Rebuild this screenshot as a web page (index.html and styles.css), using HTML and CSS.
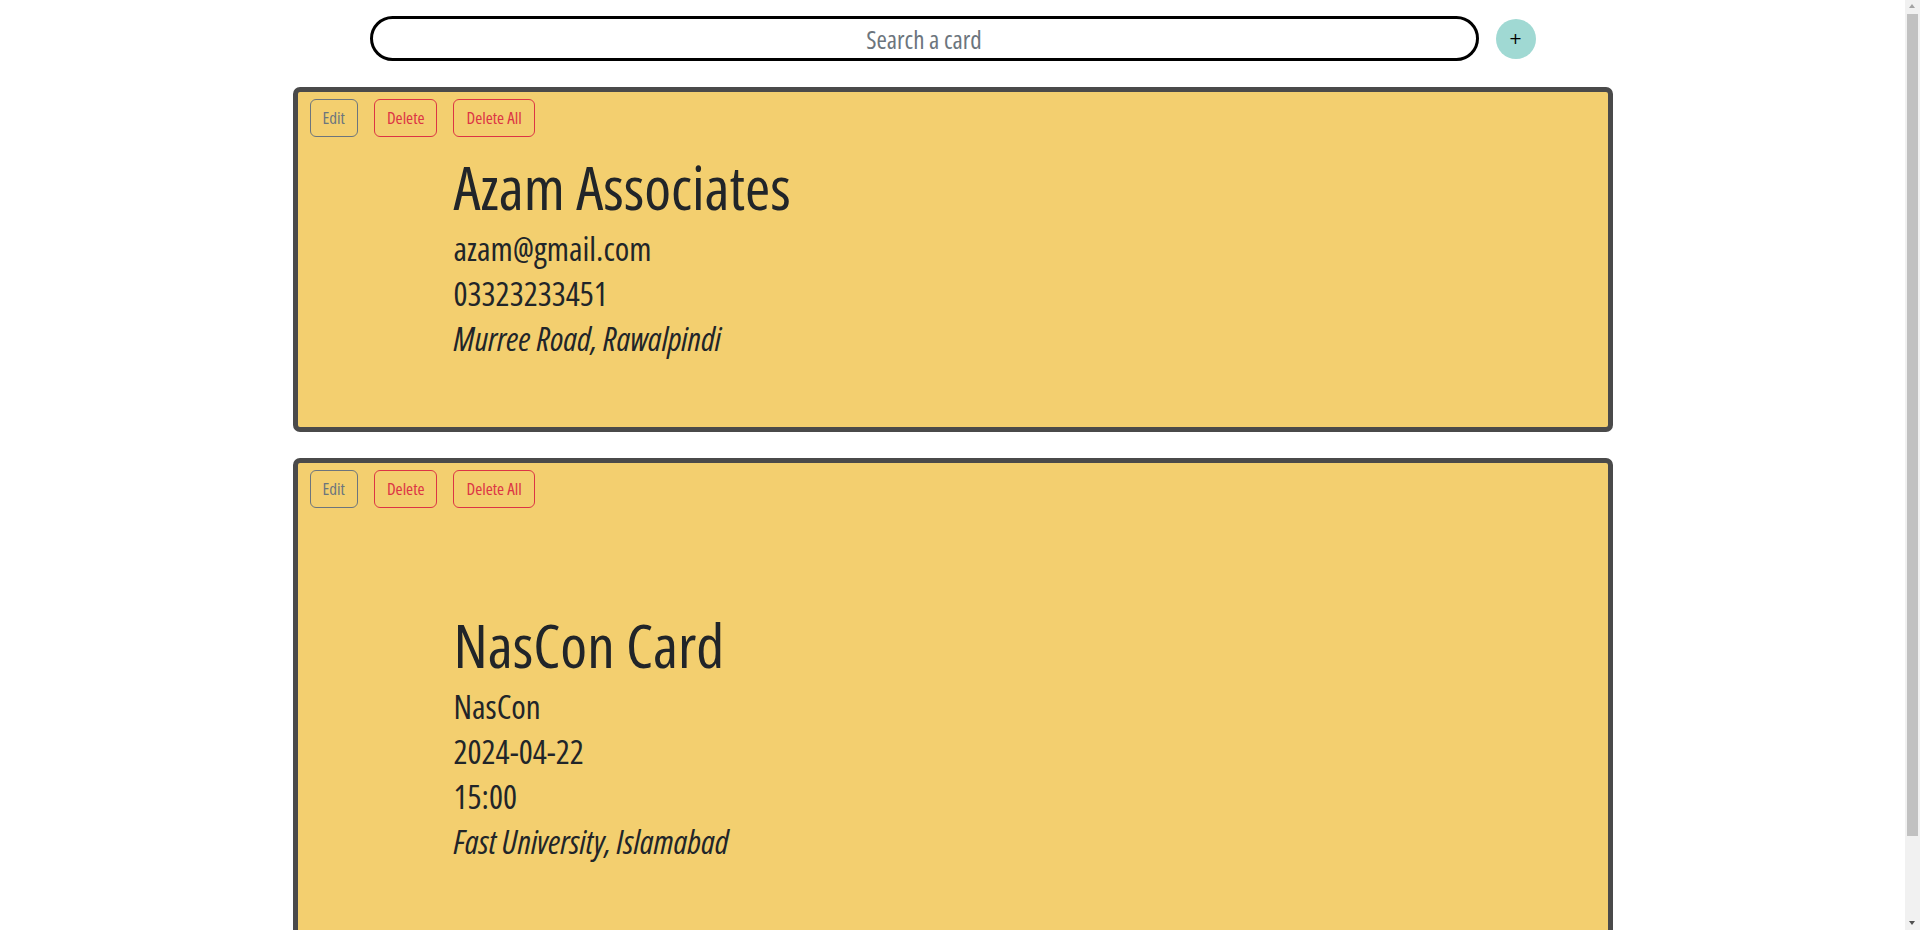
FILE: index.html
```html
<!DOCTYPE html>
<html lang="en">
<head>
<meta charset="utf-8">
<title>Cards</title>
<link rel="stylesheet" href="styles.css">
</head>
<body>
  <header class="toolbar">
    <input class="search" type="text" placeholder="Search a card">
    <button class="add-btn" type="button">+</button>
  </header>

  <main class="card-list">
    <article class="card">
      <div class="card-actions">
        <button class="btn btn-secondary" type="button">Edit</button>
        <button class="btn btn-danger" type="button">Delete</button>
        <button class="btn btn-danger" type="button">Delete All</button>
      </div>
      <div class="card-info">
        <h1 class="card-title">Azam Associates</h1>
        <p class="card-line">azam@gmail.com</p>
        <p class="card-line">03323233451</p>
        <p class="card-line card-address">Murree Road, Rawalpindi</p>
      </div>
    </article>

    <article class="card card-event">
      <div class="card-actions">
        <button class="btn btn-secondary" type="button">Edit</button>
        <button class="btn btn-danger" type="button">Delete</button>
        <button class="btn btn-danger" type="button">Delete All</button>
      </div>
      <div class="card-info">
        <h1 class="card-title">NasCon Card</h1>
        <p class="card-line">NasCon</p>
        <p class="card-line">2024-04-22</p>
        <p class="card-line">15:00</p>
        <p class="card-line card-address">Fast University, Islamabad</p>
      </div>
    </article>
  </main>

  <div class="scrollbar" aria-hidden="true">
    <span class="scroll-arrow scroll-up"></span>
    <span class="scroll-thumb"></span>
    <span class="scroll-arrow scroll-down"></span>
  </div>
</body>
</html>
```

FILE: styles.css
```css
* {
  box-sizing: border-box;
}

body {
  margin: 0;
  padding-right: 15px;
  background: #ffffff;
  color: #212529;
  font-family: "Open Sans", sans-serif;
  font-stretch: 75%;
}

/* search bar and add button */
.toolbar {
  display: flex;
  justify-content: center;
  align-items: center;
  gap: 17px;
  padding-top: 16px;
  margin-bottom: 26px;
}

.search {
  width: 1109px;
  height: 45px;
  border: 3px solid #000000;
  border-radius: 23px;
  background: #ffffff;
  font-family: inherit;
  font-stretch: 75%;
  font-size: 25px;
  color: #212529;
  text-align: center;
  outline: none;
  padding: 0 20px;
}

.search::placeholder {
  color: #6c757d;
}

.add-btn {
  width: 40px;
  height: 40px;
  border: none;
  border-radius: 50%;
  background: #a0d9d3;
  color: #000000;
  font-family: "DejaVu Sans", sans-serif;
  font-size: 16px;
  line-height: 40px;
  padding: 0;
}

/* cards */
.card-list {
  display: flex;
  flex-direction: column;
  gap: 26px;
  padding-bottom: 26px;
}

.card {
  width: 1320px;
  margin: 0 auto;
  background: #f3cf6f;
  border: 5px solid #4a4a4a;
  border-radius: 7px;
  padding: 7px 12px 66px;
}

.card-event {
  padding-bottom: 123px;
}

.card-actions {
  display: flex;
  gap: 16px;
}

.btn {
  height: 38px;
  padding: 6px 12px;
  border: 1px solid;
  border-radius: 6px;
  background: transparent;
  font-family: inherit;
  font-stretch: 75%;
  font-size: 17px;
  line-height: 24px;
}

.btn-secondary {
  color: #6c757d;
  border-color: #6c757d;
}

.btn-danger {
  color: #dc3545;
  border-color: #dc3545;
}

.card-info {
  margin: 14px 0 0 144px;
}

.card-event .card-info {
  margin-top: 101px;
}

.card-title {
  margin: 0 0 3px;
  font-size: 61px;
  font-weight: 400;
  line-height: 72px;
}

.card-line {
  margin: 0;
  font-size: 33px;
  line-height: 45px;
}

.card-address {
  font-style: italic;
}

/* page scrollbar drawn along the right edge */
.scrollbar {
  position: fixed;
  top: 0;
  right: 0;
  width: 15px;
  height: 100vh;
  background: #f1f1f1;
}

.scroll-thumb {
  position: absolute;
  top: 14px;
  left: 2px;
  width: 11px;
  height: 822px;
  background: #c1c1c1;
}

.scroll-arrow {
  position: absolute;
  left: 4px;
  width: 0;
  height: 0;
  border-left: 3.5px solid transparent;
  border-right: 3.5px solid transparent;
}

.scroll-up {
  top: 4px;
  border-bottom: 4px solid #a3a3a3;
}

.scroll-down {
  bottom: 5px;
  border-top: 4px solid #505050;
}
```
